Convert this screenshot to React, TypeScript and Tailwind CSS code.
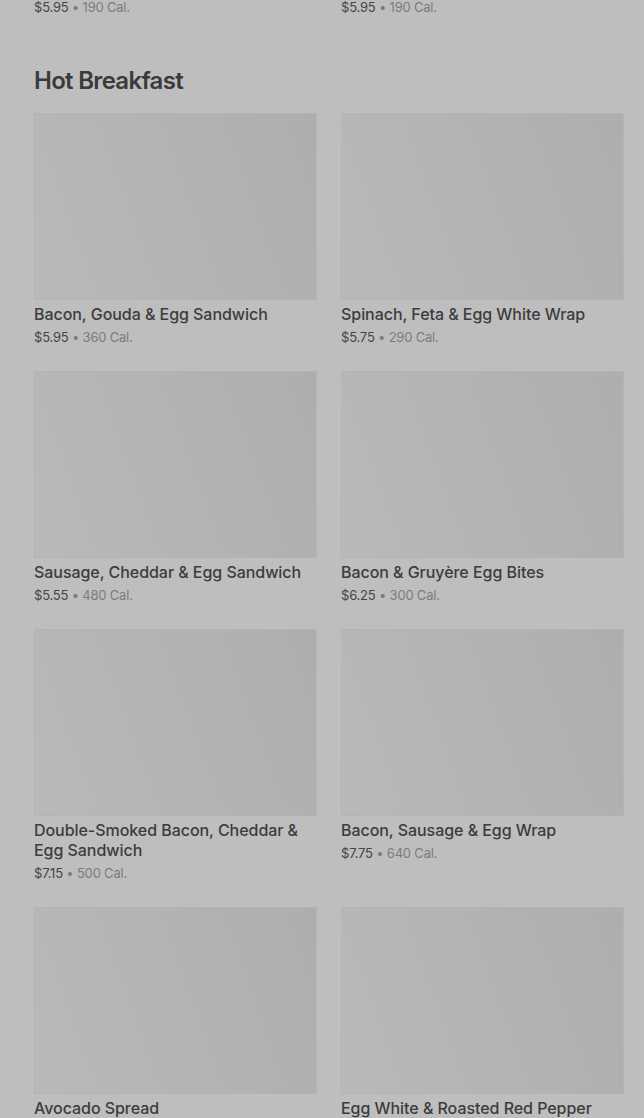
import React from "react";

type Item = { name: string; price: string; cal: string };

const items: Item[] = [
  { name: "Bacon, Gouda & Egg Sandwich", price: "$5.95", cal: "360 Cal." },
  { name: "Spinach, Feta & Egg White Wrap", price: "$5.75", cal: "290 Cal." },
  { name: "Sausage, Cheddar & Egg Sandwich", price: "$5.55", cal: "480 Cal." },
  { name: "Bacon & Gruyère Egg Bites", price: "$6.25", cal: "300 Cal." },
  { name: "Double-Smoked Bacon, Cheddar & Egg Sandwich", price: "$7.15", cal: "500 Cal." },
  { name: "Bacon, Sausage & Egg Wrap", price: "$7.75", cal: "640 Cal." },
  { name: "Avocado Spread", price: "$1.25", cal: "90 Cal." },
  { name: "Egg White & Roasted Red Pepper Egg Bites", price: "$5.45", cal: "170 Cal." },
];

function Price({ price, cal }: { price: string; cal: string }) {
  return (
    <div className="text-[13px] leading-[18px] tracking-[-0.2px]">
      <span className="text-[#454545]">{price}</span>
      <span className="text-[#7c7c7c]"> • {cal}</span>
    </div>
  );
}

function Card({ item }: { item: Item }) {
  return (
    <div className="flex flex-col">
      <div className="h-[187px] w-full border border-[#b4b4b4] bg-linear-[70deg] from-[#b9b9b9] to-[#aeaeae]" />
      <div className="mt-[4px] pr-[2px] text-[16px] font-medium leading-5 tracking-[-0.05px] text-[#3c3c3c]">
        {item.name}
      </div>
      <div className="mt-[4px]">
        <Price price={item.price} cal={item.cal} />
      </div>
    </div>
  );
}

export default function App() {
  return (
    <div
      className="h-[1118px] overflow-hidden bg-[#bebebe] pl-[34px] pr-[20px]"
      style={{ fontFamily: "Inter, 'Noto Sans', sans-serif" }}
    >
      <div className="-mt-[2px] grid grid-cols-2 gap-x-[24px]">
        <Price price="$5.95" cal="190 Cal." />
        <Price price="$5.95" cal="190 Cal." />
      </div>
      <h2 className="mt-[49px] text-[24px] font-semibold leading-8 tracking-[-0.7px] text-[#3a3a3a]">
        Hot Breakfast
      </h2>
      <div className="mt-[16px] grid grid-cols-2 gap-x-[24px] gap-y-[25px]">
        {items.map((it) => (
          <Card key={it.name} item={it} />
        ))}
      </div>
    </div>
  );
}
